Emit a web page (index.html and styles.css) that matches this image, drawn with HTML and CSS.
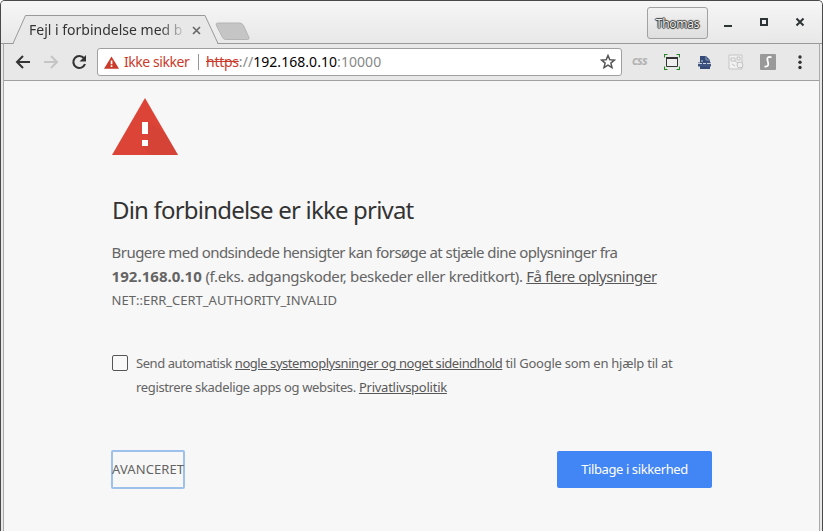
FILE: index.html
```html
<!DOCTYPE html>
<html lang="da">
<head>
<meta charset="utf-8">
<title>Fejl i forbindelse med beskyttelse</title>
<link rel="stylesheet" href="styles.css">
</head>
<body>
<div class="window">
  <header class="titlebar">
    <div class="tab">
      <svg class="tab-shape" width="208" height="30" viewBox="0 0 208 30"><path d="M1 30L13.500 .5H193L206 30Z" fill="#e8e8e8"/><path d="M0 28.500H1L13.500 .5H193L206 28.500H208" fill="none" stroke="#999"/></svg>
      <span class="tab-title">Fejl i forbindelse med b</span>
      <svg class="tab-close" width="9" height="9" viewBox="0 0 9 9"><path d="M1 1l7 7M8 1L1 8" stroke="#666" stroke-width="1.6"/></svg>
    </div>
    <svg class="new-tab" width="36" height="19" viewBox="0 0 36 19"><path d="M3 1H24.500Q27.500 1 28.500 3.500L34 15.500Q34.500 17.500 32.500 17.500H11Q8.500 17.500 7.500 15.500L1.200 3Q.5 1 3 1Z" fill="#c5c5c5" stroke="#b4b4b4"/></svg>
    <button class="profile">Thomas</button>
    <div class="controls">
      <svg width="10" height="12"><path d="M1 9h8v2H1z" fill="#2d3436"/></svg>
      <svg width="10" height="12"><path d="M2 3h6v6H2z" fill="none" stroke="#2d3436" stroke-width="2"/></svg>
      <svg width="10" height="12"><path d="M1.500 2.500l7 7M8.500 2.500l-7 7" stroke="#2d3436" stroke-width="2"/></svg>
    </div>
  </header>
  <div class="frame">
    <nav class="toolbar">
      <svg class="nav-icon" width="16" height="16" viewBox="0 0 16 16"><path d="M15 8H2.500M8 2L2 8l6 6" fill="none" stroke="#333" stroke-width="2"/></svg>
      <svg class="nav-icon" width="16" height="16" viewBox="0 0 16 16"><path d="M1 8h12.500M8 2l6 6-6 6" fill="none" stroke="#c5c5c5" stroke-width="2"/></svg>
      <svg class="nav-icon" width="16" height="16" viewBox="0 0 16 16"><path d="M13 4.200A6 6 0 1 0 14 10" fill="none" stroke="#333" stroke-width="2.100"/><path d="M15 1v6.500H8.500Z" fill="#333"/></svg>
      <div class="address">
        <svg width="15" height="13" viewBox="0 0 15 13"><path d="M7.500 .5L15 12.800H0Z" fill="#cb3929"/><path d="M6.700 4.500h1.700v3.800H6.700zM6.700 9.300h1.700V11H6.700z" fill="#fff"/></svg>
        <span class="unsafe">Ikke sikker</span>
        <span class="divider"></span>
        <span class="url"><s>https</s>://<b>192.168.0.10</b>:10000</span>
        <svg class="star" width="16" height="16" viewBox="0 0 16 16"><path d="M8 1.500l1.800 4.200 4.600.4-3.500 3 1.100 4.500L8 11.200l-4 2.400 1.100-4.500-3.500-3 4.600-.4Z" fill="none" stroke="#555" stroke-width="1.500"/></svg>
      </div>
      <div class="extensions">
        <span class="css-icon">css</span>
        <svg width="16" height="16"><path d="M2.500 3.500h11v9h-11z" fill="#eee" stroke="#333"/><path d="M2 4h12" stroke="#333" stroke-width="2"/><path d="M.5 3.500v-3h3M12.500 .5h3v3M.5 12.500v3h3M12.500 15.500h3v-3" fill="none" stroke="#278727" stroke-width="1.200"/></svg>
        <svg width="16" height="16"><path d="M4 2h6l4 4v9H4z" fill="#354a76"/><path d="M10 2v4h4" fill="none" stroke="#8d9cb8"/><path d="M2 8.500h13v4H2z" fill="#405681"/><path d="M2 9.500h4M7 9.500h3M11 9.500h4M5 7h2" stroke="#c9d1df" stroke-width="1.200"/></svg>
        <svg width="16" height="16"><path d="M1 1h13v14H1z" fill="#f1f1f1" stroke="#c5c5c5"/><path d="M3 4h4v3H3zM9 3h3v3H9zM7 7l3 2M4 10l3 2" fill="none" stroke="#c2c2c2"/><circle cx="12" cy="11" r="3" fill="#eee" stroke="#c2c2c2"/></svg>
        <svg width="16" height="16"><rect width="16" height="16" rx="1" fill="#999"/><path d="M11.500 3.500C9 2 6.500 3.500 7.500 6.500S9.500 13 4.500 12.500" fill="none" stroke="#fff" stroke-width="1.800"/></svg>
      </div>
      <svg class="menu" width="4" height="16"><g fill="#333"><circle cx="2" cy="3" r="1.700"/><circle cx="2" cy="8.300" r="1.700"/><circle cx="2" cy="13.500" r="1.700"/></g></svg>
    </nav>
    <main class="page">
      <svg class="warning" width="66" height="57" viewBox="0 0 66 57"><path d="M33 0L66 57H0Z" fill="#db4437"/><path d="M36 24L53 35L66 57H39L30 48L36 42V36Z" fill="#cf4135" opacity=".5"/><path d="M30 24h6v12h-6zM30 42h6v6h-6z" fill="#fff"/></svg>
      <h1>Din forbindelse er ikke privat</h1>
      <p class="lead"><span class="intro">Brugere med ondsindede hensigter kan forsøge at stjæle dine oplysninger fra</span><br><strong>192.168.0.10</strong><span> (f.eks. adgangskoder, beskeder eller kreditkort). </span><a class="more">Få flere oplysninger</a></p>
      <div class="code">NET::ERR_CERT_AUTHORITY_INVALID</div>
      <label class="report">
        <span class="checkbox"></span>
        <span><span class="tight">Send automatisk <a>nogle systemoplysninger og noget sideindhold</a></span><span> til Google som en hjælp til at</span><br><span class="snug">registrere skadelige apps og websites. </span><a>Privatlivspolitik</a></span>
      </label>
      <div class="actions">
        <button class="advanced">AVANCERET</button>
        <button class="primary">Tilbage i sikkerhed</button>
      </div>
    </main>
  </div>
</div>
</body>
</html>
```
FILE: styles.css
```css
* { box-sizing: border-box; }
body { margin: 0; background: #fff; font-family: "Noto Sans", sans-serif; overflow: hidden; }
button { font: inherit; padding: 0; margin: 0; }
svg { display: block; flex: none; }
.window { width: 823px; height: 531px; border: 1px solid #494949; border-bottom: 0; border-radius: 5px 5px 0 0; background: #e8e8e8; overflow: hidden; display: flex; flex-direction: column; }
.titlebar { height: 43px; flex: none; display: flex; background: linear-gradient(#f6f6f6, #e8e8e8); border-bottom: 1px solid #999; }
.tab { margin: 14px 0 -1px 11px; width: 208px; height: 29px; display: grid; grid-template-columns: 17px 155px 7px 9px; align-items: center; }
.tab-shape { grid-area: 1 / 1 / 2 / 5; align-self: start; }
.tab-title { grid-area: 1 / 2; font-size: 14px; line-height: 28px; letter-spacing: 0; color: #333; white-space: nowrap; -webkit-mask-image: linear-gradient(90deg, #000 84%, transparent 102%); mask-image: linear-gradient(90deg, #000 84%, transparent 102%); }
.tab-close { grid-area: 1 / 4; margin-left: 1px; }
.new-tab { margin: 21px 0 0 -5px; }
.profile { margin: 6px 0 0 auto; width: 61px; height: 32px; border: 1px solid #a1a1a1; border-radius: 3px; background: linear-gradient(#f2f2f2, #dedede); color: #eee; font-size: 12px; letter-spacing: -.25px; text-shadow: 0 0 1px #222, 0 1px 1px #333, 0 -1px 1px #444, 1px 0 1px #444, -1px 0 1px #444; }
.controls { display: flex; gap: 26px; padding: 15px 17px 0 15px; }
.frame { flex: 1; margin: 0 2px; border: 1px solid #aaa; border-width: 0 1px; display: flex; flex-direction: column; }
.toolbar { height: 37px; flex: none; display: flex; align-items: center; border-bottom: 1px solid #a0a0a0; padding-left: 11px; }
.nav-icon { margin-right: 12px; }
.address { width: 525px; height: 28px; margin-left: -2px; background: #fff; border: 1px solid #a0a0a0; border-radius: 3px; display: flex; align-items: center; padding: 0 5px 0 6px; font-size: 14px; line-height: 24px; white-space: nowrap; }
.unsafe { color: #cb3929; margin-left: 5px; width: 65px; letter-spacing: -.45px; }
.divider { width: 1px; height: 16px; background: #999; margin: 0 7px 0 9px; }
.url { color: #888; letter-spacing: .05px; }
.url s { color: #cb3929; letter-spacing: -.25px; }
.url b { color: #000; font-weight: 400; }
.star { margin-left: auto; }
.extensions { display: flex; align-items: center; gap: 16px; margin-left: 10px; }
.css-icon { width: 16px; font: italic bold 12px/14px "Noto Sans", sans-serif; color: #b3b3b3; letter-spacing: -.7px; margin-top: -2px; }
.menu { margin-left: 22px; }
.page { flex: 1; background: #f7f7f7; padding: 17px 0 0 108px; color: #646464; white-space: nowrap; }
h1 { margin: 36px 0 0; font-size: 24px; line-height: 38px; font-weight: 400; color: #333; letter-spacing: -.8px; }
.lead { margin: 11px 0 0 -.4px; font-size: 15px; line-height: 24px; letter-spacing: -.35px; }
.intro { letter-spacing: -.56px; }
.lead strong { letter-spacing: .03px; }
.more { letter-spacing: -.43px; }
.code { margin-left: -.4px; font-size: 13px; line-height: 24px; letter-spacing: 0; }
a { color: #585858; text-decoration: underline; }
.report { display: flex; gap: 8px; margin-top: 39px; font-size: 13px; line-height: 24px; letter-spacing: -.25px; }
.tight { letter-spacing: -.44px; }
.snug { letter-spacing: -.35px; }
.checkbox { width: 16px; height: 16px; border: 1px solid #555; border-radius: 2px; margin-top: 4px; background: #f9f9f9; }
.actions { display: flex; justify-content: space-between; width: 601px; margin: 51px 0 0 -1px; font-size: 13px; }
.advanced { width: 74px; height: 39px; border: 2px solid #9dc1ea; border-radius: 2px; padding: 0 2px 2px 0; text-indent: -1px; background: transparent; color: #646464; letter-spacing: .1px; }
.primary { width: 155px; height: 37px; margin-top: 1px; padding-bottom: 2px; border: 0; border-radius: 2px; background: #4285f4; color: #fff; letter-spacing: -.4px; }
```
